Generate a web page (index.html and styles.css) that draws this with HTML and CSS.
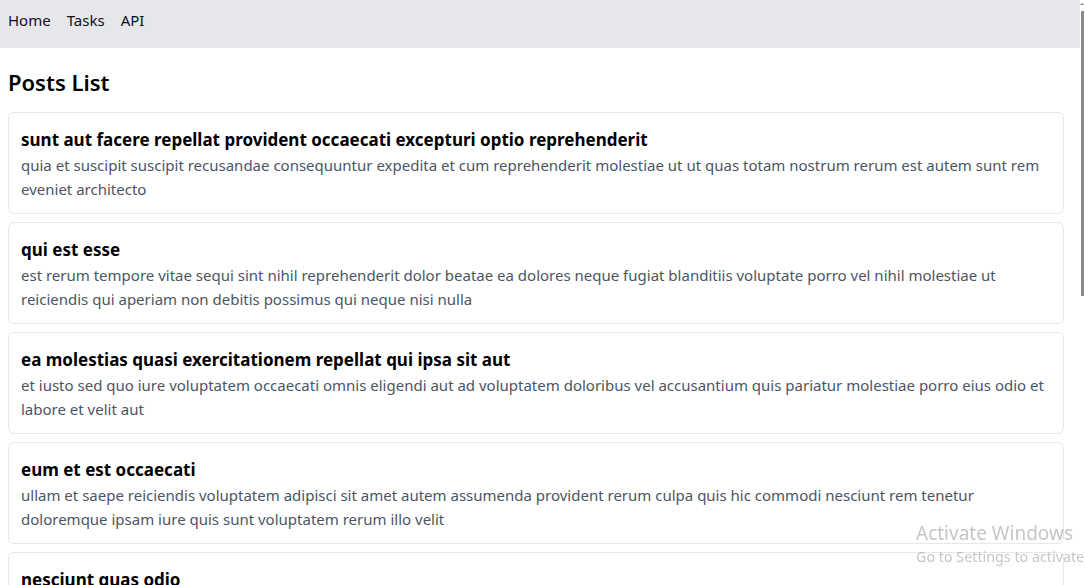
FILE: index.html
```html
<!DOCTYPE html>
<html lang="en">
<head>
<meta charset="utf-8">
<title>Posts List</title>
<link rel="stylesheet" href="styles.css">
</head>
<body>
<div class="page">
  <nav class="nav">
    <a class="nav-link" href="#">Home</a>
    <a class="nav-link" href="#">Tasks</a>
    <a class="nav-link" href="#">API</a>
  </nav>
  <main class="main">
    <h1 class="page-title">Posts List</h1>
    <ul class="post-list">
      <li class="post-card">
        <h2 class="post-title">sunt aut facere repellat provident occaecati excepturi optio reprehenderit</h2>
        <p class="post-body">quia et suscipit suscipit recusandae consequuntur expedita et cum reprehenderit molestiae ut ut quas totam nostrum rerum est autem sunt rem eveniet architecto</p>
      </li>
      <li class="post-card">
        <h2 class="post-title">qui est esse</h2>
        <p class="post-body">est rerum tempore vitae sequi sint nihil reprehenderit dolor beatae ea dolores neque fugiat blanditiis voluptate porro vel nihil molestiae ut reiciendis qui aperiam non debitis possimus qui neque nisi nulla</p>
      </li>
      <li class="post-card">
        <h2 class="post-title">ea molestias quasi exercitationem repellat qui ipsa sit aut</h2>
        <p class="post-body">et iusto sed quo iure voluptatem occaecati omnis eligendi aut ad voluptatem doloribus vel accusantium quis pariatur molestiae porro eius odio et labore et velit aut</p>
      </li>
      <li class="post-card">
        <h2 class="post-title">eum et est occaecati</h2>
        <p class="post-body">ullam et saepe reiciendis voluptatem adipisci sit amet autem assumenda provident rerum culpa quis hic commodi nesciunt rem tenetur doloremque ipsam iure quis sunt voluptatem rerum illo velit</p>
      </li>
      <li class="post-card">
        <h2 class="post-title">nesciunt quas odio</h2>
        <p class="post-body">repudiandae veniam quaerat sunt sed alias aut fugiat sit autem sed est voluptatem omnis possimus esse voluptatibus quis est aut tenetur dolor neque</p>
      </li>
    </ul>
  </main>
</div>
<div class="scrollbar">
  <span class="scroll-arrow"></span>
  <span class="scroll-thumb"></span>
</div>
<div class="watermark">
  <div class="wm-title">Activate Windows</div>
  <div class="wm-sub">Go to Settings to activate</div>
</div>
</body>
</html>
```
FILE: styles.css
```css
html, body {
  margin: 0;
  padding: 0;
  height: 100%;
  overflow: hidden;
}
body {
  display: flex;
  background: #ffffff;
  font-family: "Noto Sans", "Open Sans", sans-serif;
  color: #000;
}
.page {
  flex: 1;
  min-width: 0;
}
.nav {
  display: flex;
  gap: 16px;
  height: 48px;
  box-sizing: border-box;
  align-items: flex-start;
  padding: 8px 8px 0;
  background: #e5e7eb;
}
.nav-link {
  color: #111;
  text-decoration: none;
  font-size: 15px;
  line-height: 24px;
}
.main {
  padding: 18px 16px 0 8px;
}
.page-title {
  margin: 0 0 14px;
  font-size: 22px;
  line-height: 32px;
  font-weight: 600;
  color: #000;
}
.post-list {
  list-style: none;
  margin: 0;
  padding: 0;
  display: flex;
  flex-direction: column;
  gap: 8px;
}
.post-card {
  border: 1px solid #e5e7eb;
  border-radius: 6px;
  padding: 14px 12px 12px;
}
.post-title {
  margin: 0;
  font-size: 17px;
  line-height: 26px;
  font-weight: 700;
  color: #000;
}
.post-body {
  margin: 0;
  font-size: 15px;
  line-height: 24px;
  color: #4b5563;
}
.scrollbar {
  width: 5px;
  flex: none;
  display: flex;
  flex-direction: column;
  align-items: flex-end;
  background: #fff;
}
.scroll-arrow {
  width: 0;
  height: 0;
  margin: 3px 1px 6px 0;
  border-left: 2px solid transparent;
  border-right: 2px solid transparent;
  border-bottom: 2px solid #888;
}
.scroll-thumb {
  width: 3px;
  height: 285px;
  background: #8a8a8a;
  margin-right: 1px;
}
.watermark {
  position: fixed;
  left: 916px;
  top: 521px;
  color: rgba(150, 150, 150, 0.55);
  font-family: "Noto Sans", "Open Sans", sans-serif;
  white-space: nowrap;
}
.wm-title {
  font-size: 19px;
  line-height: 25px;
}
.wm-sub {
  font-size: 14.3px;
  line-height: 22px;
}
```
